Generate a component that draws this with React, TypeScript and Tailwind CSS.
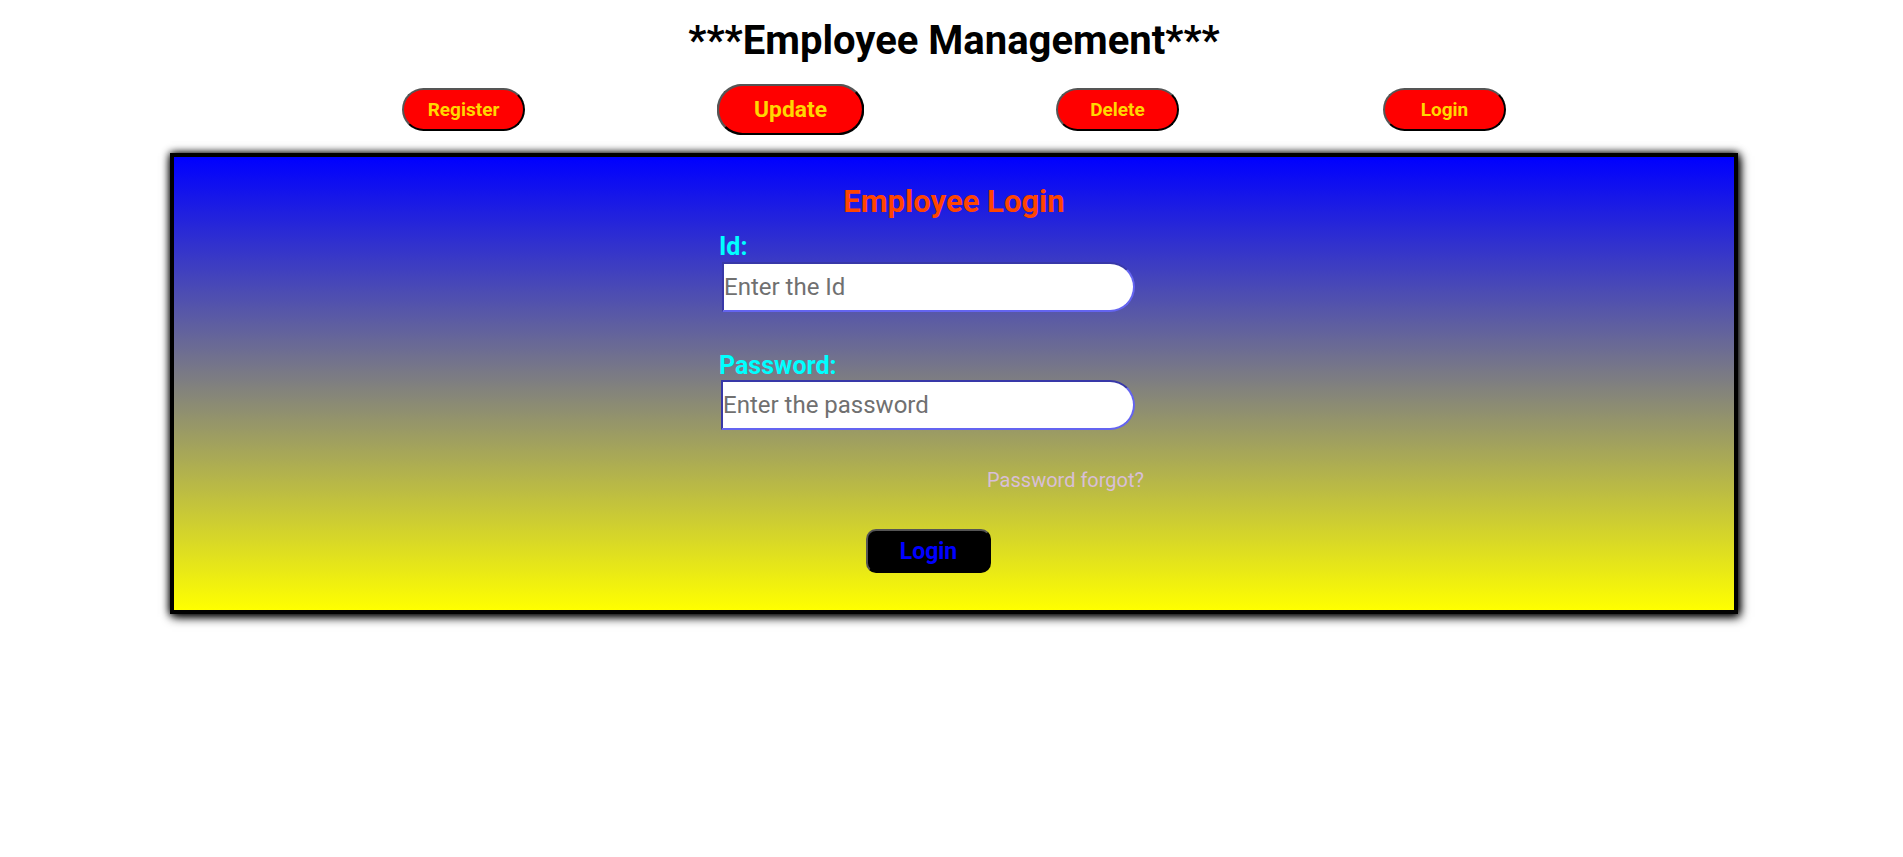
import { useState } from "react";

const navItems = ["Register", "Update", "Delete", "Login"];

export default function App() {
  const [id, setId] = useState("");
  const [password, setPassword] = useState("");

  return (
    <div className="min-h-screen bg-white pl-[5px] font-['Roboto',sans-serif]">
      <h1 className="pt-[21px] text-center text-[40px] font-bold leading-none text-black">
        ***Employee Management***
      </h1>

      <nav className="mt-[27px] flex justify-center gap-[204px]">
        {navItems.map((item) => (
          <button
            key={item}
            type="button"
            className={[
              "h-[43px] w-[123px] rounded-full border-2 border-t-[#555] border-l-[#555] border-r-black border-b-black bg-[#ff0000] text-[19px] font-bold leading-none text-[#ffd700]",
              item === "Update" ? "scale-[1.2]" : "",
            ].join(" ")}
          >
            {item}
          </button>
        ))}
      </nav>

      <div className="mx-auto mt-[22px] w-[1568px] border-4 border-black bg-[linear-gradient(#0000ff,#ffff00)] pt-[29px] pb-[37px] shadow-[2px_3px_10px_#000,0_0_8px_#000]">
        <h2 className="text-center text-[31px] font-bold leading-none text-[#ff4500]">
          Employee Login
        </h2>

        <form
          className="ml-[545px] mt-[17px] flex w-[425px] flex-col"
          onSubmit={(e) => e.preventDefault()}
        >
          <label className="text-[25px] font-bold leading-none text-[#00ffff]">Id:</label>
          <input
            value={id}
            onChange={(e) => setId(e.target.value)}
            placeholder="Enter the Id"
            className="ml-[3px] mt-[3px] h-[50px] w-[413px] rounded-r-full border-2 border-t-[#3838a8] border-l-[#3838a8] border-r-[#6464f0] border-b-[#6464f0] bg-white p-0 text-[24px] text-black outline-none placeholder:text-[#707070]"
          />

          <label className="mt-[41px] text-[25px] font-bold leading-none text-[#00ffff]">
            Password:
          </label>
          <input
            type="password"
            value={password}
            onChange={(e) => setPassword(e.target.value)}
            placeholder="Enter the password"
            className="ml-[2px] mt-[2px] h-[50px] w-[414px] rounded-r-full border-2 border-t-[#3838a8] border-l-[#3838a8] border-r-[#6464f0] border-b-[#6464f0] bg-white p-0 text-[24px] text-black outline-none placeholder:text-[#707070]"
          />

          <a href="#" className="mt-[40px] text-right text-[20px] leading-none text-[#d8bfd8]">
            Password forgot?
          </a>

          <button
            type="submit"
            className="ml-[147px] mt-[39px] h-[44px] w-[125px] rounded-[10px] border-2 border-t-[#555] border-l-[#555] border-r-black border-b-black bg-black text-[23px] font-bold leading-none text-[#0000ff]"
          >
            Login
          </button>
        </form>
      </div>
    </div>
  );
}
